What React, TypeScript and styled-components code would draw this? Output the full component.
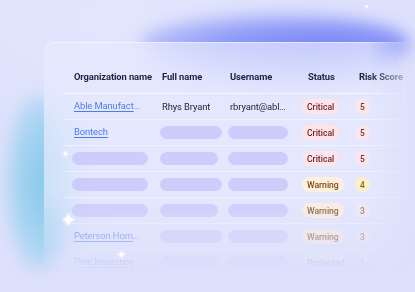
import { FC } from "react"
import styled, { createGlobalStyle } from "styled-components"

const GlobalStyle = createGlobalStyle`
  html, body {
    margin: 0;
    padding: 0;
    background: #dee1fc;
    font-family: Roboto, "Noto Sans", sans-serif;
  }
`

type Level = "critical" | "warning" | "protected"

interface Row {
  org?: string
  name?: string
  user?: string
  status: Level
  score: number
}

const rows: Row[] = [
  { org: "Able Manufacturing", name: "Rhys Bryant", user: "rbryant@ableman.com", status: "critical", score: 5 },
  { org: "Bontech", status: "critical", score: 5 },
  { status: "critical", score: 5 },
  { status: "warning", score: 4 },
  { status: "warning", score: 3 },
  { org: "Peterson Home Services", status: "warning", score: 3 },
  { org: "Pine Insurance", status: "protected", score: 1 },
]

const statusLabel: Record<Level, string> = {
  critical: "Critical",
  warning: "Warning",
  protected: "Protected",
}

const Sparkle: FC<{ size: number; x: number; y: number }> = ({ size, x, y }) => (
  <Star style={{ left: x - size / 2, top: y - size / 2, width: size, height: size }} viewBox="0 0 20 20">
    <path d="M10 0 C10.8 6.5 13.5 9.2 20 10 C13.5 10.8 10.8 13.5 10 20 C9.2 13.5 6.5 10.8 0 10 C6.5 9.2 9.2 6.5 10 0 Z" fill="#fff" />
  </Star>
)

export default function App() {
  return (
    <>
      <GlobalStyle />
      <Stage>
        <TopGlow />
        <LeftGlow />
        <Card>
          <Table>
            <HeadRow>
              <Head>Organization name</Head>
              <Head>Full name</Head>
              <Head>Username</Head>
              <Head $pad={5}>Status</Head>
              <Head $pad={4}>Risk Score</Head>
            </HeadRow>
            {rows.map((r, i) => (
              <BodyRow key={i}>
                <Cell>{r.org ? <OrgLink>{r.org}</OrgLink> : <Skeleton $w={76} />}</Cell>
                <Cell>{r.name ? <Text>{r.name}</Text> : <Skeleton $w={i % 2 ? 62 : 58} />}</Cell>
                <Cell>{r.user ? <Text $max={57}>{r.user}</Text> : <Skeleton $w={60} />}</Cell>
                <Cell>
                  <Pill $level={r.status}>{statusLabel[r.status]}</Pill>
                </Cell>
                <Cell>
                  <Score $score={r.score}>{r.score}</Score>
                </Cell>
              </BodyRow>
            ))}
          </Table>
        </Card>
        <Sparkle size={7} x={65} y={153} />
        <Sparkle size={15} x={68} y={219} />
        <Sparkle size={9} x={121} y={254} />
        <Sparkle size={5} x={366} y={6} />
      </Stage>
    </>
  )
}

const Stage = styled.div`
  position: relative;
  width: 415px;
  height: 292px;
  overflow: hidden;
  padding: 42px 0 0 44px;
  box-sizing: border-box;
  background: radial-gradient(ellipse 260px 120px at 120px 20px, #e3e6fd 0%, rgba(222, 225, 252, 0) 100%);
`

const TopGlow = styled.div`
  position: absolute;
  left: 140px;
  top: 14px;
  width: 270px;
  height: 60px;
  border-radius: 50%;
  background: radial-gradient(ellipse at 68% 55%, #7784f5 0%, #8c98f7 40%, rgba(160, 168, 248, 0) 100%);
  filter: blur(8px);
`

const LeftGlow = styled.div`
  position: absolute;
  left: 6px;
  top: 95px;
  width: 64px;
  height: 175px;
  border-radius: 50%;
  background: radial-gradient(ellipse at 60% 50%, #86c9ea 0%, #a2d2f0 45%, rgba(190, 215, 248, 0) 100%);
  filter: blur(8px);
`

const Card = styled.div`
  position: relative;
  width: 420px;
  height: 250px;
  border-radius: 9px 0 0 0;
  background: rgba(232, 234, 253, 0.68);
  backdrop-filter: blur(16px);
  box-shadow: inset 0 1px 0 rgba(255, 255, 255, 0.5);
  -webkit-mask-image: linear-gradient(to bottom, #000 60%, transparent 92%),
    linear-gradient(to right, #000 77%, transparent 89%);
  mask-image: linear-gradient(to bottom, #000 60%, transparent 92%),
    linear-gradient(to right, #000 77%, transparent 89%);
  -webkit-mask-composite: source-in;
  mask-composite: intersect;
`

const Table = styled.div`
  margin-left: 20px;
  display: flex;
  flex-direction: column;
`

const columns = "88px 68px 73px 52px 1fr"

const HeadRow = styled.div`
  display: grid;
  grid-template-columns: ${columns};
  padding: 28px 0 9px 10px;
  border-bottom: 1px solid rgba(255, 255, 255, 0.6);
`

const Head = styled.div<{ $pad?: number }>`
  padding-left: ${(p) => p.$pad ?? 0}px;
  font-size: 9.4px;
  line-height: 14px;
  letter-spacing: -0.1px;
  font-weight: 700;
  color: #1d2340;
  white-space: nowrap;
`

const BodyRow = styled.div`
  display: grid;
  grid-template-columns: ${columns};
  align-items: center;
  height: 25px;
  padding-left: 10px;
  border-bottom: 1px solid rgba(255, 255, 255, 0.45);
`

const Cell = styled.div`
  display: flex;
  align-items: center;
  min-width: 0;
`

const OrgLink = styled.a`
  display: block;
  max-width: 66px;
  padding: 2px 0 3px;
  line-height: 12px;
  overflow: hidden;
  text-overflow: ellipsis;
  white-space: nowrap;
  font-size: 9.4px;
  letter-spacing: -0.1px;
  color: #4a7cf0;
  text-decoration: underline;
  text-decoration-thickness: 1px;
  text-underline-offset: 1.5px;
`

const Text = styled.span<{ $max?: number }>`
  max-width: ${(p) => (p.$max ? `${p.$max}px` : "none")};
  overflow: hidden;
  text-overflow: ellipsis;
  white-space: nowrap;
  font-size: 9.4px;
  letter-spacing: -0.1px;
  color: #1c2236;
`

const Skeleton = styled.div<{ $w: number }>`
  width: ${(p) => p.$w}px;
  height: 13px;
  margin-left: -2px;
  border-radius: 7px;
  background: rgba(200, 197, 251, 0.8);
`

const pillColors: Record<Level, [string, string]> = {
  critical: ["#fde5e8", "#6e1c28"],
  warning: ["#fdf0df", "#7f4916"],
  protected: ["#f3eef6", "#8a7f98"],
}

const Pill = styled.span<{ $level: Level }>`
  display: inline-flex;
  align-items: center;
  height: 15px;
  padding: 0 5px;
  margin-left: -1px;
  border-radius: 8px;
  background: ${(p) => pillColors[p.$level][0]};
  color: ${(p) => pillColors[p.$level][1]};
  font-size: 8.6px;
  font-weight: 500;
`

const scoreColors: Record<number, [string, string]> = {
  5: ["#fbe6ea", "#6e3340"],
  4: ["#fbf1c6", "#8a6a24"],
  3: ["#f6e9ee", "#8c6a68"],
  1: ["#efeaf5", "#8a8098"],
}

const Score = styled.span<{ $score: number }>`
  display: inline-flex;
  align-items: center;
  justify-content: center;
  width: 15px;
  height: 15px;
  border-radius: 50%;
  background: ${(p) => scoreColors[p.$score][0]};
  color: ${(p) => scoreColors[p.$score][1]};
  font-size: 8.4px;
  font-weight: 500;
`

const Star = styled.svg`
  position: absolute;
  filter: drop-shadow(0 0 2px rgba(255, 255, 255, 0.8));
`
